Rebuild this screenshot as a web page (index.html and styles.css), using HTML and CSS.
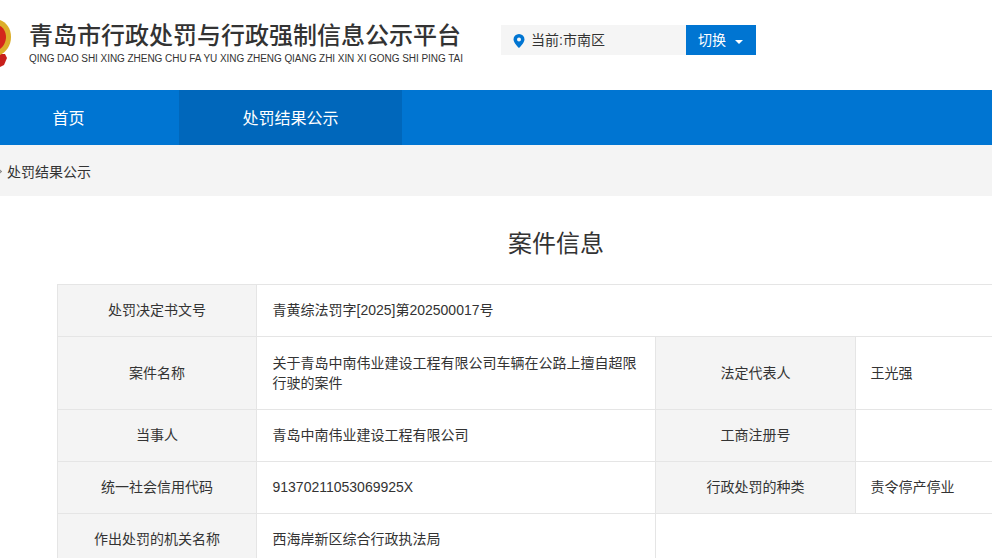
FILE: index.html
```html
<!DOCTYPE html>
<html lang="zh-CN">
<head>
<meta charset="utf-8">
<title>案件信息</title>
<link rel="stylesheet" href="styles.css">
</head>
<body>
<header class="header">
  <svg class="emblem" width="12" height="50" viewBox="0 0 12 50" aria-hidden="true">
    <path d="M0 36h5l2 4-3 7-4 2z" fill="#c8201c"/>
    <path d="M0 2c6 2 11 8 11 17S6 34 0 37z" fill="#dcae2a"/>
    <path d="M0 8c3 1 6 6 6 11s-3 10-6 12z" fill="#d4261c"/>
  </svg>
  <div class="brand">
    <div class="brand-title">青岛市行政处罚与行政强制信息公示平台</div>
    <div class="brand-pinyin">QING DAO SHI XING ZHENG CHU FA YU XING ZHENG QIANG ZHI XIN XI GONG SHI PING TAI</div>
  </div>
  <div class="region">
    <div class="region-current">
      <svg class="pin" width="12" height="14" viewBox="0 0 12 14" aria-hidden="true"><path fill-rule="evenodd" d="M6 0a5.500 5.500 0 0 1 5.500 5.500C11.500 9 6 14 6 14S.5 9 .5 5.500A5.500 5.500 0 0 1 6 0zm0 3.500a2 2 0 1 0 0 4 2 2 0 0 0 0-4z" fill="#0075d2"/></svg>
      <span class="region-text">当前:市南区</span>
    </div>
    <div class="region-btn"><span class="region-text">切换</span><i class="caret"></i></div>
  </div>
</header>
<nav class="nav">
  <a class="nav-item nav-home">首页</a>
  <a class="nav-item nav-active">处罚结果公示</a>
</nav>
<div class="crumb"><i class="crumb-sep"></i><span>处罚结果公示</span></div>
<main class="main">
  <h1 class="title">案件信息</h1>
  <table class="info">
    <colgroup><col class="c1"><col class="c2"><col class="c3"><col class="c4"></colgroup>
    <tr class="r52"><th>处罚决定书文号</th><td colspan="3">青黄综法罚字[2025]第202500017号</td></tr>
    <tr class="r73"><th>案件名称</th><td>关于青岛中南伟业建设工程有限公司车辆在公路上擅自超限行驶的案件</td><th>法定代表人</th><td class="val-right">王光强</td></tr>
    <tr class="r52"><th>当事人</th><td>青岛中南伟业建设工程有限公司</td><th>工商注册号</th><td class="val-right"></td></tr>
    <tr class="r52"><th>统一社会信用代码</th><td>91370211053069925X</td><th>行政处罚的种类</th><td class="val-right">责令停产停业</td></tr>
    <tr class="r52"><th>作出处罚的机关名称</th><td>西海岸新区综合行政执法局</td><td colspan="2"></td></tr>
  </table>
</main>
</body>
</html>
```
FILE: styles.css
```css
* { box-sizing: border-box; }
html, body { margin: 0; height: 558px; overflow: hidden; background: #fff; }
body { width: 992px; color: #333; font-family: "Liberation Sans", "Noto Sans CJK SC", sans-serif; font-size: 14px; }
.header { height: 90px; display: flex; align-items: flex-start; }
.emblem { flex: none; margin-top: 18px; }
.brand { width: 460px; margin-left: 17px; padding-top: 19px; }
.brand-title { font-size: 24px; line-height: 33px; font-weight: 500; color: #333; white-space: nowrap; }
.brand-pinyin { font-size: 10px; line-height: 12px; margin-top: 1px; color: #333; white-space: nowrap; letter-spacing: -.05px; }
.region { display: flex; margin-left: 12px; margin-top: 25px; height: 30px; }
.region-current { width: 185px; background: #f5f5f5; display: flex; align-items: center; padding-left: 12px; gap: 6px; font-size: 14px; }
.pin { margin-top: 2px; }
.region-text { margin-top: -2px; }
.region-btn { width: 70px; background: #0075d2; color: #fff; display: flex; align-items: center; padding-left: 12px; gap: 9px; }
.caret { width: 0; height: 0; border: 4px solid transparent; border-top-color: #fff; border-bottom: 0; margin-top: 4px; }
.nav { height: 55px; background: #0075d2; display: flex; }
.nav-item { color: #fff; font-size: 16px; display: flex; align-items: center; justify-content: center; padding-bottom: 2px; }
.nav-home { width: 179px; padding-right: 42px; }
.nav-active { width: 223px; background: #0067bb; }
.crumb { height: 51px; background: #f4f4f4; display: flex; align-items: center; padding-left: 7px; position: relative; }
.crumb-sep { position: absolute; left: -4px; top: 24px; width: 5px; height: 5px; border-top: 1px solid #888; border-right: 1px solid #888; transform: rotate(45deg); }
.main { padding-left: 57px; width: 1110px; }
.title { margin: 31px 0 23px; padding-right: 55px; font-size: 24px; line-height: 34px; font-weight: 400; text-align: center; color: #333; }
.info { width: 1053px; table-layout: fixed; border-collapse: collapse; }
.c1 { width: 199px; }
.c2 { width: 399px; }
.c3 { width: 200px; }
.info th, .info td { border: 1px solid #e5e5e5; font-size: 14px; line-height: 20px; font-weight: 400; color: #333; padding-bottom: 2px; }
.info th { background: #f4f4f4; text-align: center; }
.info td { padding-left: 15.5px; padding-right: 15px; }
.info .val-right { padding-left: 14.5px; }
.r52 { height: 52px; }
.r73 { height: 73px; }
```
